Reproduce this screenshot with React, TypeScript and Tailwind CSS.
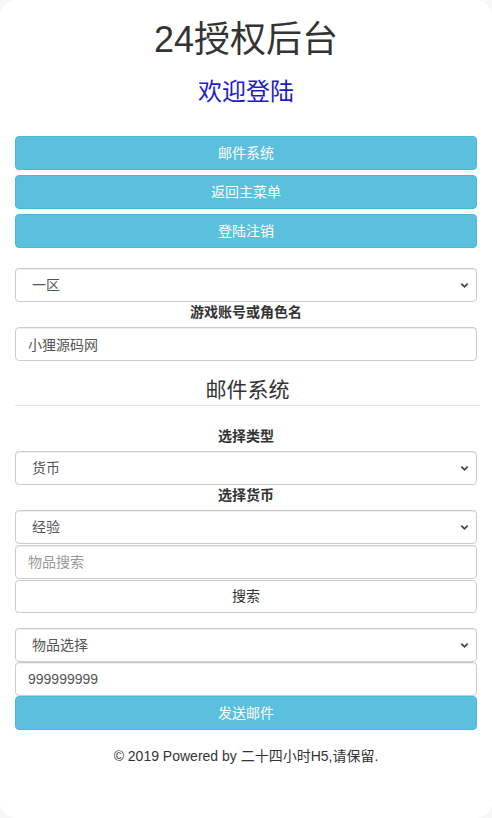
const font = {
  fontFamily: '"Liberation Sans", Arial, "Noto Sans CJK SC", sans-serif',
};

const Chevron = () => (
  <svg
    className="pointer-events-none absolute right-[8px] top-1/2 -translate-y-1/2"
    width="9"
    height="9"
    viewBox="0 0 10 10"
  >
    <path d="M1.5 3.5 L5 7 L8.5 3.5" fill="none" stroke="#444" strokeWidth="2" />
  </svg>
);

function Select({ value }: { value: string }) {
  return (
    <div className="relative">
      <select
        defaultValue={value}
        style={font}
        className="block h-[34px] w-full appearance-none rounded-[4px] border border-[#ccc] bg-white pl-[16px] text-[14px] text-[#555] shadow-[inset_0_1px_1px_rgba(0,0,0,0.075)] outline-none"
      >
        <option>{value}</option>
      </select>
      <Chevron />
    </div>
  );
}

function Input({ value, placeholder }: { value?: string; placeholder?: string }) {
  return (
    <input
      defaultValue={value}
      placeholder={placeholder}
      style={font}
      className="block h-[34px] w-full rounded-[4px] border border-[#ccc] bg-white px-[12px] text-[14px] text-[#555] shadow-[inset_0_1px_1px_rgba(0,0,0,0.075)] outline-none placeholder:text-[#999]"
    />
  );
}

function InfoButton({ children }: { children: string }) {
  return (
    <button
      style={font}
      className="block h-[34px] w-full rounded-[4px] border border-[#46b8da] bg-[#5bc0de] text-[14px] text-white"
    >
      {children}
    </button>
  );
}

function Label({ children }: { children: string }) {
  return (
    <div className="mb-[5px] h-[20px] text-center text-[14px] font-bold leading-[20px] text-[#333]">
      {children}
    </div>
  );
}

export default function App() {
  return (
    <div className="min-h-[818px] bg-[#f7f7f7]" style={font}>
      <div className="h-[818px] rounded-[16px] bg-white px-[15px] text-[#333]">
        <h1 className="pt-[20px] text-center text-[36px] leading-[40px] text-[#333]">
          24授权后台
        </h1>
        <h3 className="mt-[19px] text-center text-[24px] leading-[26px] text-[#1c1ccc]">
          欢迎登陆
        </h3>

        <div className="mt-[31px] flex flex-col gap-[5px]">
          <InfoButton>邮件系统</InfoButton>
          <InfoButton>返回主菜单</InfoButton>
          <InfoButton>登陆注销</InfoButton>
        </div>

        <div className="mt-[20px]">
          <Select value="一区" />
          <Label>游戏账号或角色名</Label>
          <Input value="小狸源码网" />
        </div>

        <div className="mt-[14px] mb-[20px] h-[31px] w-[calc(100%+3px)] border-b border-[#e5e5e5] text-center text-[21px] leading-[30px] text-[#333]">
          邮件系统
        </div>

        <Label>选择类型</Label>
        <Select value="货币" />
        <Label>选择货币</Label>
        <Select value="经验" />
        <div className="mt-px">
          <Input placeholder="物品搜索" />
        </div>
        <button
          style={font}
          className="mt-px block h-[33px] w-full rounded-[4px] border border-[#ccc] bg-white text-[14px] text-[#333]"
        >
          搜索
        </button>

        <div className="mt-[15px] flex flex-col">
          <Select value="物品选择" />
          <Input value="999999999" />
          <InfoButton>发送邮件</InfoButton>
        </div>

        <p className="mt-[16px] text-center text-[14px] leading-[20px] text-[#333]">
          © 2019 Powered by 二十四小时H5,请保留.
        </p>
      </div>
    </div>
  );
}
